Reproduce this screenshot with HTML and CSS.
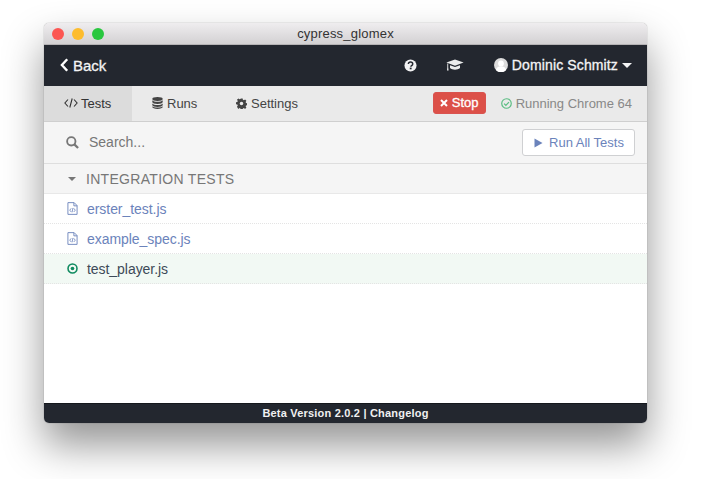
FILE: index.html
```html
<!DOCTYPE html>
<html lang="en">
<head>
<meta charset="utf-8">
<title>cypress_glomex</title>
<link rel="stylesheet" href="styles.css">
</head>
<body>
<div class="window">
  <div class="titlebar">
    <div class="lights">
      <span class="light red"></span><span class="light yellow"></span><span class="light green"></span>
    </div>
    <span class="title">cypress_glomex</span>
  </div>
  <header class="topnav">
    <a class="back">
      <svg class="back-icon" viewBox="0 0 9 14" width="9" height="14"><path d="M7.200 1.200 1.900 7l5.300 5.800" fill="none" stroke="#fff" stroke-width="2.400"/></svg>
      <span>Back</span>
    </a>
    <div class="spacer"></div>
    <svg class="help" viewBox="0 0 14 14" width="13" height="13"><circle cx="7" cy="7" r="6.500" fill="#f2f2f3"/><path d="M4.700 5.400C4.800 4 5.800 3.300 7 3.300c1.300 0 2.400.8 2.400 2 0 1.900-2 1.600-2 3" fill="none" stroke="#23272f" stroke-width="1.600"/><rect x="6.200" y="9.300" width="2" height="1.800" fill="#23272f"/></svg>
    <svg class="grad" viewBox="0 0 18 13" width="18" height="13"><path d="M9 .6 17.600 3.600 9 6.800.4 3.600z" fill="#eceded"/><path d="M4 6.200v2.900c1.200 1.100 3 1.600 5 1.600s3.800-.5 5-1.600V6.200L9 8.100zM1.300 4.500h.9v3.800l.4 3.100H1l.3-3.100z" fill="#eceded"/></svg>
    <div class="user">
      <svg class="avatar" viewBox="0 0 14 14" width="14" height="14"><circle cx="7" cy="7" r="7" fill="#dcdcdc"/><circle cx="7" cy="5.400" r="2.900" fill="#fff"/><path d="M1.800 12c.8-2.800 2.800-3.800 5.200-3.800s4.400 1 5.200 3.800A7 7 0 0 1 1.800 12" fill="#fff"/></svg>
      <span class="user-name">Dominic Schmitz</span>
      <span class="caret"></span>
    </div>
  </header>
  <nav class="tabs">
    <a class="tab tab-tests">
      <svg viewBox="0 0 14 10" width="14" height="10"><path d="M4 1.500.9 5 4 8.500M10 1.500 13.100 5 10 8.500M8.200.5 5.800 9.500" fill="none" stroke="#333" stroke-width="1.100"/></svg>
      <span>Tests</span>
    </a>
    <a class="tab tab-runs">
      <svg viewBox="0 0 11 12" width="11" height="12"><ellipse cx="5.500" cy="2" rx="5.200" ry="1.900" fill="#444"/><path d="M.3 3.200c1 1 2.900 1.500 5.200 1.500s4.200-.5 5.200-1.500v1.700c0 1.100-2.300 2-5.200 2s-5.200-.9-5.200-2zM.3 6.400c1 1 2.900 1.500 5.200 1.500s4.200-.5 5.200-1.500v1.700c0 1.100-2.300 2-5.200 2s-5.200-.9-5.200-2zM.3 9.300c1 1 2.900 1.300 5.200 1.300s4.200-.3 5.200-1.300v.8c0 1.100-2.300 1.900-5.200 1.900S.3 11.200.3 10.100z" fill="#444"/></svg>
      <span>Runs</span>
    </a>
    <a class="tab tab-settings">
      <svg viewBox="0 0 12 12" width="11" height="11"><path d="M4.900.4h2.200l.3 1.600 1.100.5 1.400-.9 1.500 1.500-.9 1.400.5 1.100 1.600.3v2.200l-1.600.3-.5 1.100.9 1.400-1.500 1.500-1.400-.9-1.100.5-.3 1.600H4.900l-.3-1.600-1.100-.5-1.400.9L.6 9.800l.9-1.400-.5-1.100L-.6 7V4.800L1 4.500l.5-1.100-.9-1.400L2.100.5l1.400.9 1.100-.5z" transform="translate(.5 .1) scale(.95)" fill="#444"/><circle cx="6" cy="6" r="1.900" fill="#eaeaea"/></svg>
      <span>Settings</span>
    </a>
    <div class="spacer"></div>
    <button class="stop">
      <svg viewBox="0 0 8 8" width="8" height="8"><path d="M1 1 7 7M7 1 1 7" stroke="#fff" stroke-width="2" fill="none"/></svg>
      <span>Stop</span>
    </button>
    <div class="browser">
      <svg viewBox="0 0 12 12" width="11" height="11"><circle cx="6" cy="6" r="5.200" fill="none" stroke="#5bbd83" stroke-width="1.300"/><path d="M3.400 6.100 5.300 8l3.400-3.500" fill="none" stroke="#5bbd83" stroke-width="1.400"/></svg>
      <span>Running Chrome 64</span>
    </div>
  </nav>
  <div class="searchbar">
    <svg viewBox="0 0 14 14" width="13" height="13"><circle cx="5.700" cy="5.700" r="4.500" fill="none" stroke="#777" stroke-width="2"/><path d="M9 9 13 13" stroke="#777" stroke-width="2.400"/></svg>
    <span class="search-text">Search...</span>
    <div class="spacer"></div>
    <button class="run-all">
      <svg viewBox="0 0 9 10" width="9" height="10"><path d="M.5 .5 8.500 5 .5 9.500z" fill="#6b83bb"/></svg>
      <span>Run All Tests</span>
    </button>
  </div>
  <div class="section-head">
    <span class="section-caret"></span>
    <span>INTEGRATION TESTS</span>
  </div>
  <ul class="specs">
    <li class="spec">
      <svg viewBox="0 0 12 14" width="11" height="13"><path d="M1 .6h6.800L11 3.800V13.400H1z" fill="none" stroke="#6b83bb"/><path d="M7.500.8v3.300H11" fill="none" stroke="#6b83bb"/><path d="M4.600 6.800 3 8.800l1.600 2M7.400 6.800 9 8.800l-1.600 2M6.500 6.400 5.500 11.200" fill="none" stroke="#6b83bb" stroke-width=".9"/></svg>
      <span>erster_test.js</span>
    </li>
    <li class="spec">
      <svg viewBox="0 0 12 14" width="11" height="13"><path d="M1 .6h6.800L11 3.800V13.400H1z" fill="none" stroke="#6b83bb"/><path d="M7.500.8v3.300H11" fill="none" stroke="#6b83bb"/><path d="M4.600 6.800 3 8.800l1.600 2M7.400 6.800 9 8.800l-1.600 2M6.500 6.400 5.500 11.200" fill="none" stroke="#6b83bb" stroke-width=".9"/></svg>
      <span>example_spec.js</span>
    </li>
    <li class="spec current">
      <svg viewBox="0 0 12 12" width="11" height="11"><circle cx="6" cy="6" r="4.900" fill="none" stroke="#0f8a5f" stroke-width="1.700"/><circle cx="6" cy="6" r="2" fill="#0f8a5f"/></svg>
      <span>test_player.js</span>
    </li>
  </ul>
  <div class="main-fill"></div>
  <footer class="footer">Beta Version 2.0.2 | Changelog</footer>
</div>
</body>
</html>
```
FILE: styles.css
```css
* { box-sizing: border-box; }
html, body { margin: 0; height: 100%; background: #fff; overflow: hidden; }
body {
  padding: 23px 54px 0 44px;
  font-family: "Liberation Sans", Arial, sans-serif;
  font-size: 13px;
}
.window {
  width: 603px;
  height: 400px;
  display: flex;
  flex-direction: column;
  background: #fff;
  border-radius: 5px;
  overflow: hidden;
  box-shadow: 0 22px 40px rgba(0,0,0,.42), 0 0 1px rgba(0,0,0,.55);
}
.spacer { flex: 1; }
.titlebar {
  height: 22px;
  flex: none;
  position: relative;
  display: flex;
  align-items: center;
  justify-content: center;
  background: linear-gradient(#efedef, #d3d1d3);
  border-bottom: 1px solid #b5b3b5;
  color: #333;
  font-size: 13px;
  letter-spacing: .2px;
}
.lights { position: absolute; left: 8px; top: 5px; display: flex; gap: 8px; }
.light { width: 12px; height: 12px; border-radius: 50%; }
.red { background: #fc5652; }
.yellow { background: #fdbc2d; }
.green { background: #29c73f; }
.topnav {
  height: 41px;
  flex: none;
  display: flex;
  align-items: center;
  padding: 0 15px 1px 16px;
  background: #23272f;
  color: #f4f4f5;
  font-size: 14px;
  -webkit-text-stroke: .3px #f4f4f5;
}
.back { display: flex; align-items: center; gap: 4px; font-size: 15px; }
.help { margin-right: 29px; }
.grad { margin-right: 30px; }
.user { display: flex; align-items: center; gap: 4px; }
.user-name { letter-spacing: .13px; }
.caret {
  width: 0;
  height: 0;
  border-left: 5px solid transparent;
  border-right: 5px solid transparent;
  border-top: 5px solid #f4f4f5;
  margin-top: 1px;
}
.tabs {
  height: 36px;
  flex: none;
  display: flex;
  align-items: center;
  background: #eaeaea;
  border-bottom: 1px solid #cfcfcf;
  color: #444;
  font-size: 13px;
}
.tab {
  height: 35px;
  display: flex;
  align-items: center;
  gap: 4px;
  padding-bottom: 1px;
}
.tab-tests { width: 88px; padding-left: 20px; gap: 3px; background: #dcdcdc; color: #333; }
.tab-runs { width: 104px; padding-left: 20px; }
.stop {
  height: 22px;
  width: 53px;
  margin: 0 15px 1px 0;
  padding: 0 0 1px;
  display: flex;
  align-items: center;
  justify-content: center;
  gap: 4px;
  background: #dc5048;
  border: 1px solid #d9534f;
  border-radius: 3px;
  color: #fff;
  font: 13px "Liberation Sans", Arial, sans-serif;
  -webkit-text-stroke: .3px #fff;
}
.browser {
  display: flex;
  align-items: center;
  gap: 4px;
  margin-right: 15px;
  padding-bottom: 1px;
  color: #888;
  font-size: 13px;
}
.searchbar {
  height: 42px;
  flex: none;
  display: flex;
  align-items: center;
  padding: 0 12px 0 22px;
  background: #f5f5f5;
  border-bottom: 1px solid #dedede;
  color: #777;
}
.search-text { margin-left: 10px; margin-bottom: 2px; font-size: 14px; }
.run-all {
  width: 113px;
  height: 27px;
  padding: 0 0 0 1px;
  display: flex;
  align-items: center;
  justify-content: center;
  gap: 6px;
  background: #fff;
  border: 1px solid #cfd0d2;
  border-radius: 3px;
  color: #6b83bb;
  font: 13px "Liberation Sans", Arial, sans-serif;
}
.section-head {
  height: 30px;
  flex: none;
  display: flex;
  align-items: center;
  gap: 10px;
  padding: 0 0 0 24px;
  background: #f5f5f5;
  border-bottom: 1px solid #e8e8e8;
  color: #777;
  font-size: 14px;
  letter-spacing: .3px;
}
.section-caret {
  width: 0;
  height: 0;
  border-left: 4px solid transparent;
  border-right: 4px solid transparent;
  border-top: 4px solid #777;
}
.specs { margin: 0; padding: 0; list-style: none; flex: none; }
.spec {
  height: 30px;
  display: flex;
  align-items: center;
  gap: 9px;
  padding: 0 0 0 23px;
  border-bottom: 1px dotted #e4e4e4;
  color: #6b83bb;
  font-size: 14px;
  letter-spacing: -.05px;
}
.spec.current { background: #f2f9f4; color: #3d4a58; }
.main-fill { flex: 1; background: #fff; }
.footer {
  height: 20px;
  flex: none;
  display: flex;
  align-items: center;
  justify-content: center;
  padding-bottom: 1px;
  background: #23272f;
  border-top: 1px solid #15181d;
  color: #f0f0f1;
  font-size: 11px;
  font-weight: bold;
  letter-spacing: .2px;
}
```
